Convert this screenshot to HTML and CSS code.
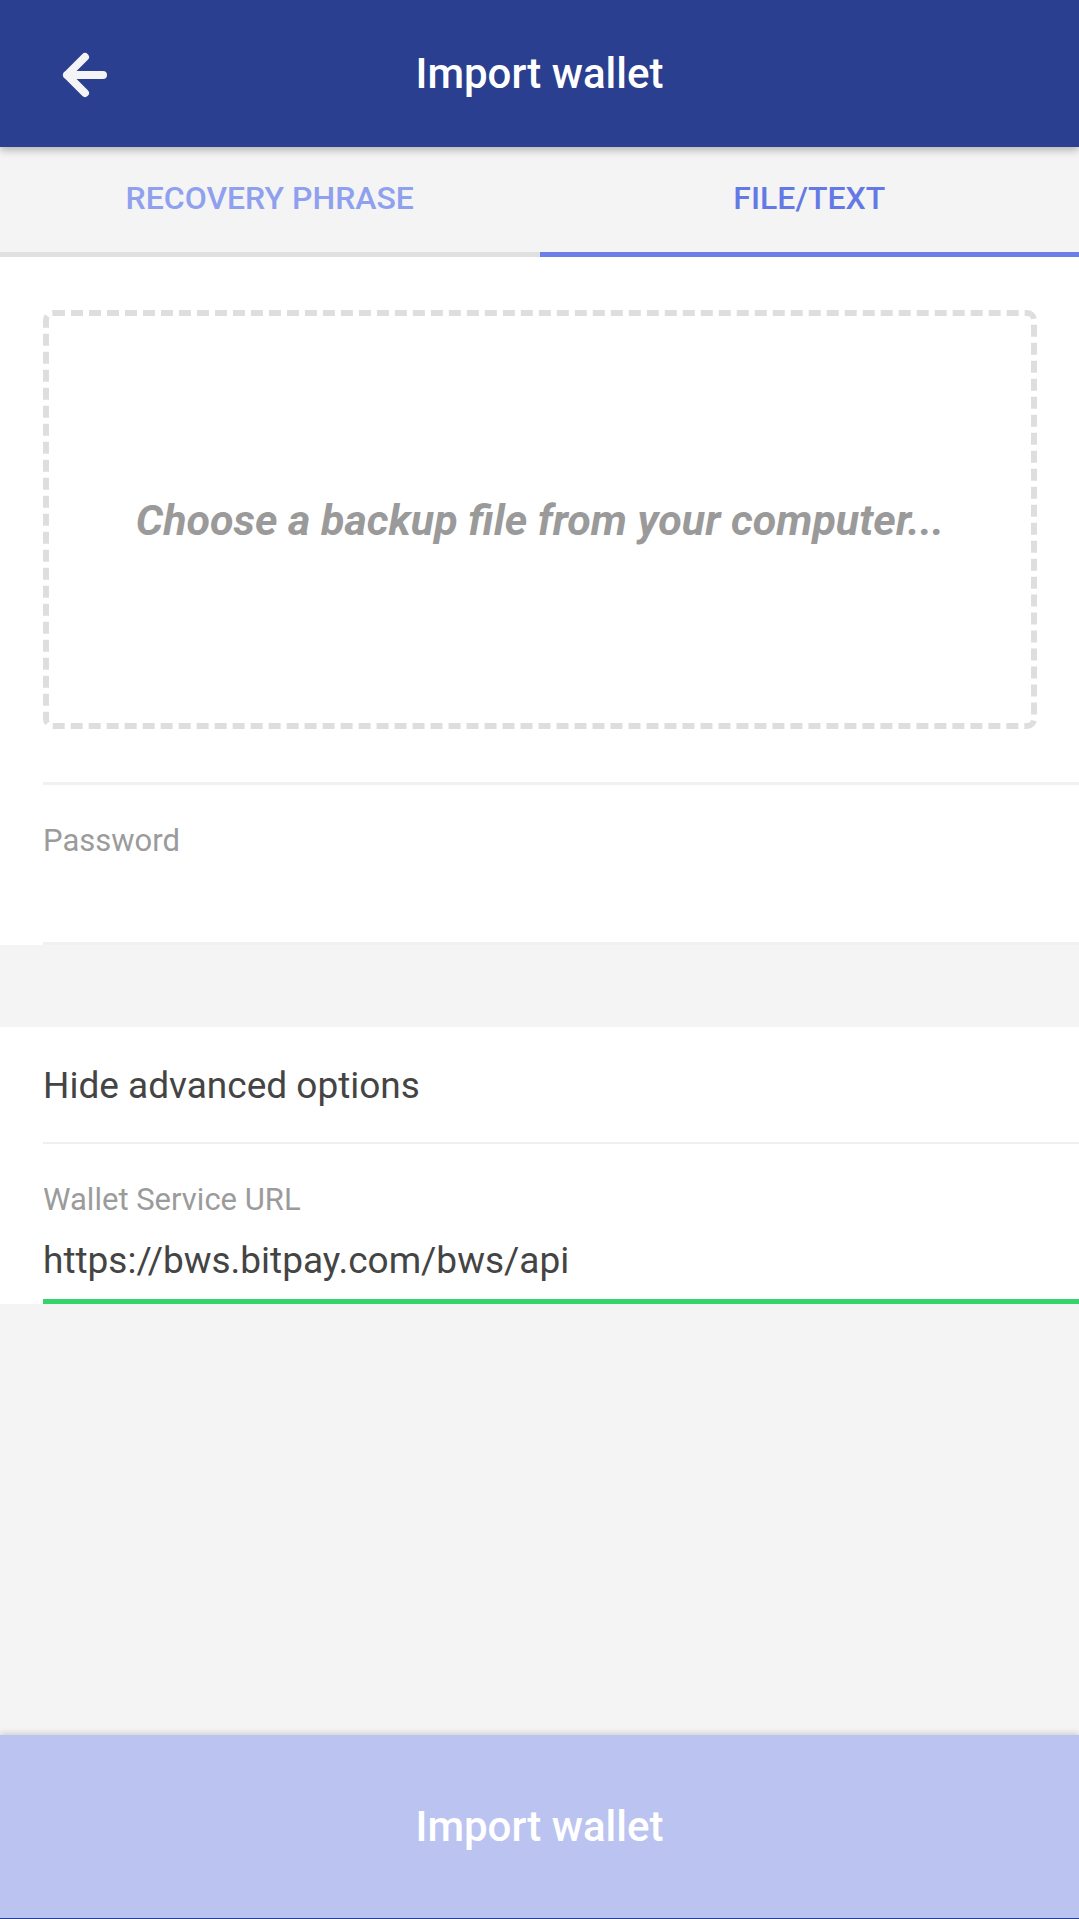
FILE: index.html
```html
<!DOCTYPE html>
<html lang="en">
<head>
<meta charset="utf-8">
<title>Import wallet</title>
<link rel="stylesheet" href="styles.css">
</head>
<body>
<div class="app">
  <header class="topbar">
    <div class="back">
      <svg width="50" height="48" viewBox="0 0 50 48" aria-hidden="true">
        <path d="M26 6 L8 24 L26 42 M8 24 L44 24" fill="none" stroke="#f4f4f6" stroke-width="8" stroke-linecap="round" stroke-linejoin="round"/>
      </svg>
    </div>
    <h1 class="title">Import wallet</h1>
    <div></div>
  </header>

  <nav class="tabs">
    <div class="tab">RECOVERY PHRASE</div>
    <div class="tab active">FILE/TEXT</div>
  </nav>

  <section class="card">
    <div class="dropwrap">
      <div class="dropzone">Choose a backup file from your computer...</div>
    </div>
    <div class="field pw">
      <div class="label">Password</div>
    </div>
  </section>

  <div class="gap"></div>

  <section class="card">
    <div class="row">Hide advanced options</div>
    <div class="field url">
      <div class="label">Wallet Service URL</div>
      <div class="value">https://bws.bitpay.com/bws/api</div>
    </div>
  </section>

  <div class="spacer"></div>

  <footer class="bottom">
    <button class="import">Import wallet</button>
  </footer>
</div>
</body>
</html>
```
FILE: styles.css
```css
* { box-sizing: border-box; }
html, body { margin: 0; padding: 0; }
body {
  background: #f4f4f4;
  font-family: Roboto, "Noto Sans", "Liberation Sans", sans-serif;
}
.app {
  width: 1079px;
  height: 1919px;
  display: flex;
  flex-direction: column;
  overflow: hidden;
}
.topbar {
  position: relative;
  z-index: 2;
  height: 147px;
  flex: 0 0 147px;
  background: #2a3f8f;
  display: grid;
  grid-template-columns: 1fr auto 1fr;
  align-items: center;
  box-shadow: 0 3px 8px rgba(0,0,0,0.28);
}
.back {
  padding-left: 59px;
  padding-top: 2px;
  display: flex;
  align-items: center;
}
.back svg { display: block; }
.title {
  margin: 0;
  color: #ffffff;
  font-size: 42px;
  font-weight: 500;
}
.tabs {
  flex: 0 0 110px;
  display: grid;
  grid-template-columns: 1fr 1fr;
  background: #f4f4f4;
}
.tab {
  display: flex;
  align-items: center;
  justify-content: center;
  font-size: 32px;
  font-weight: 500;
  color: #8fa0ee;
  border-bottom: 5px solid #e0e0e0;
  padding-bottom: 4px;
}
.tab.active {
  color: #6479e6;
  border-bottom-color: #6a80e8;
}
.card {
  background: #ffffff;
}
.dropwrap {
  padding: 53px 42px 53px 43px;
}
.dropzone {
  height: 419px;
  border: 6px dashed #dedede;
  border-radius: 10px;
  display: flex;
  align-items: center;
  justify-content: center;
  color: #9a9a9a;
  font-size: 43px;
  font-weight: 700;
  font-style: italic;
}
.field {
  margin-left: 43px;
}
.field.pw {
  border-top: 3px solid #f1f1f1;
  border-bottom: 3px solid #f1f1f1;
  height: 163px;
  padding-top: 36px;
}
.label {
  font-size: 31px;
  line-height: 40px;
  color: #9b9b9b;
}
.gap {
  flex: 0 0 82px;
}
.row {
  height: 117px;
  padding-left: 43px;
  display: flex;
  align-items: center;
  font-size: 37px;
  color: #444444;
  position: relative;
}
.row::after {
  content: "";
  position: absolute;
  left: 43px;
  right: 0;
  bottom: 0;
  height: 2px;
  background: #efefef;
}
.field.url {
  height: 160px;
  padding-top: 36px;
  border-bottom: 5px solid #35d46a;
}
.value {
  margin-top: 17px;
  font-size: 37px;
  line-height: 48px;
  color: #444444;
}
.spacer {
  flex: 1 1 auto;
}
.bottom {
  flex: 0 0 184px;
  box-shadow: 0 -2px 6px rgba(0,0,0,0.15);
  border-bottom: 1px solid #2a3f8f;
  display: flex;
}
.import {
  flex: 1;
  border: 0;
  margin: 0;
  background: #bbc4f0;
  color: #ffffff;
  font-family: Roboto, "Noto Sans", "Liberation Sans", sans-serif;
  font-size: 42px;
  font-weight: 500;
  padding: 0;
}
```
